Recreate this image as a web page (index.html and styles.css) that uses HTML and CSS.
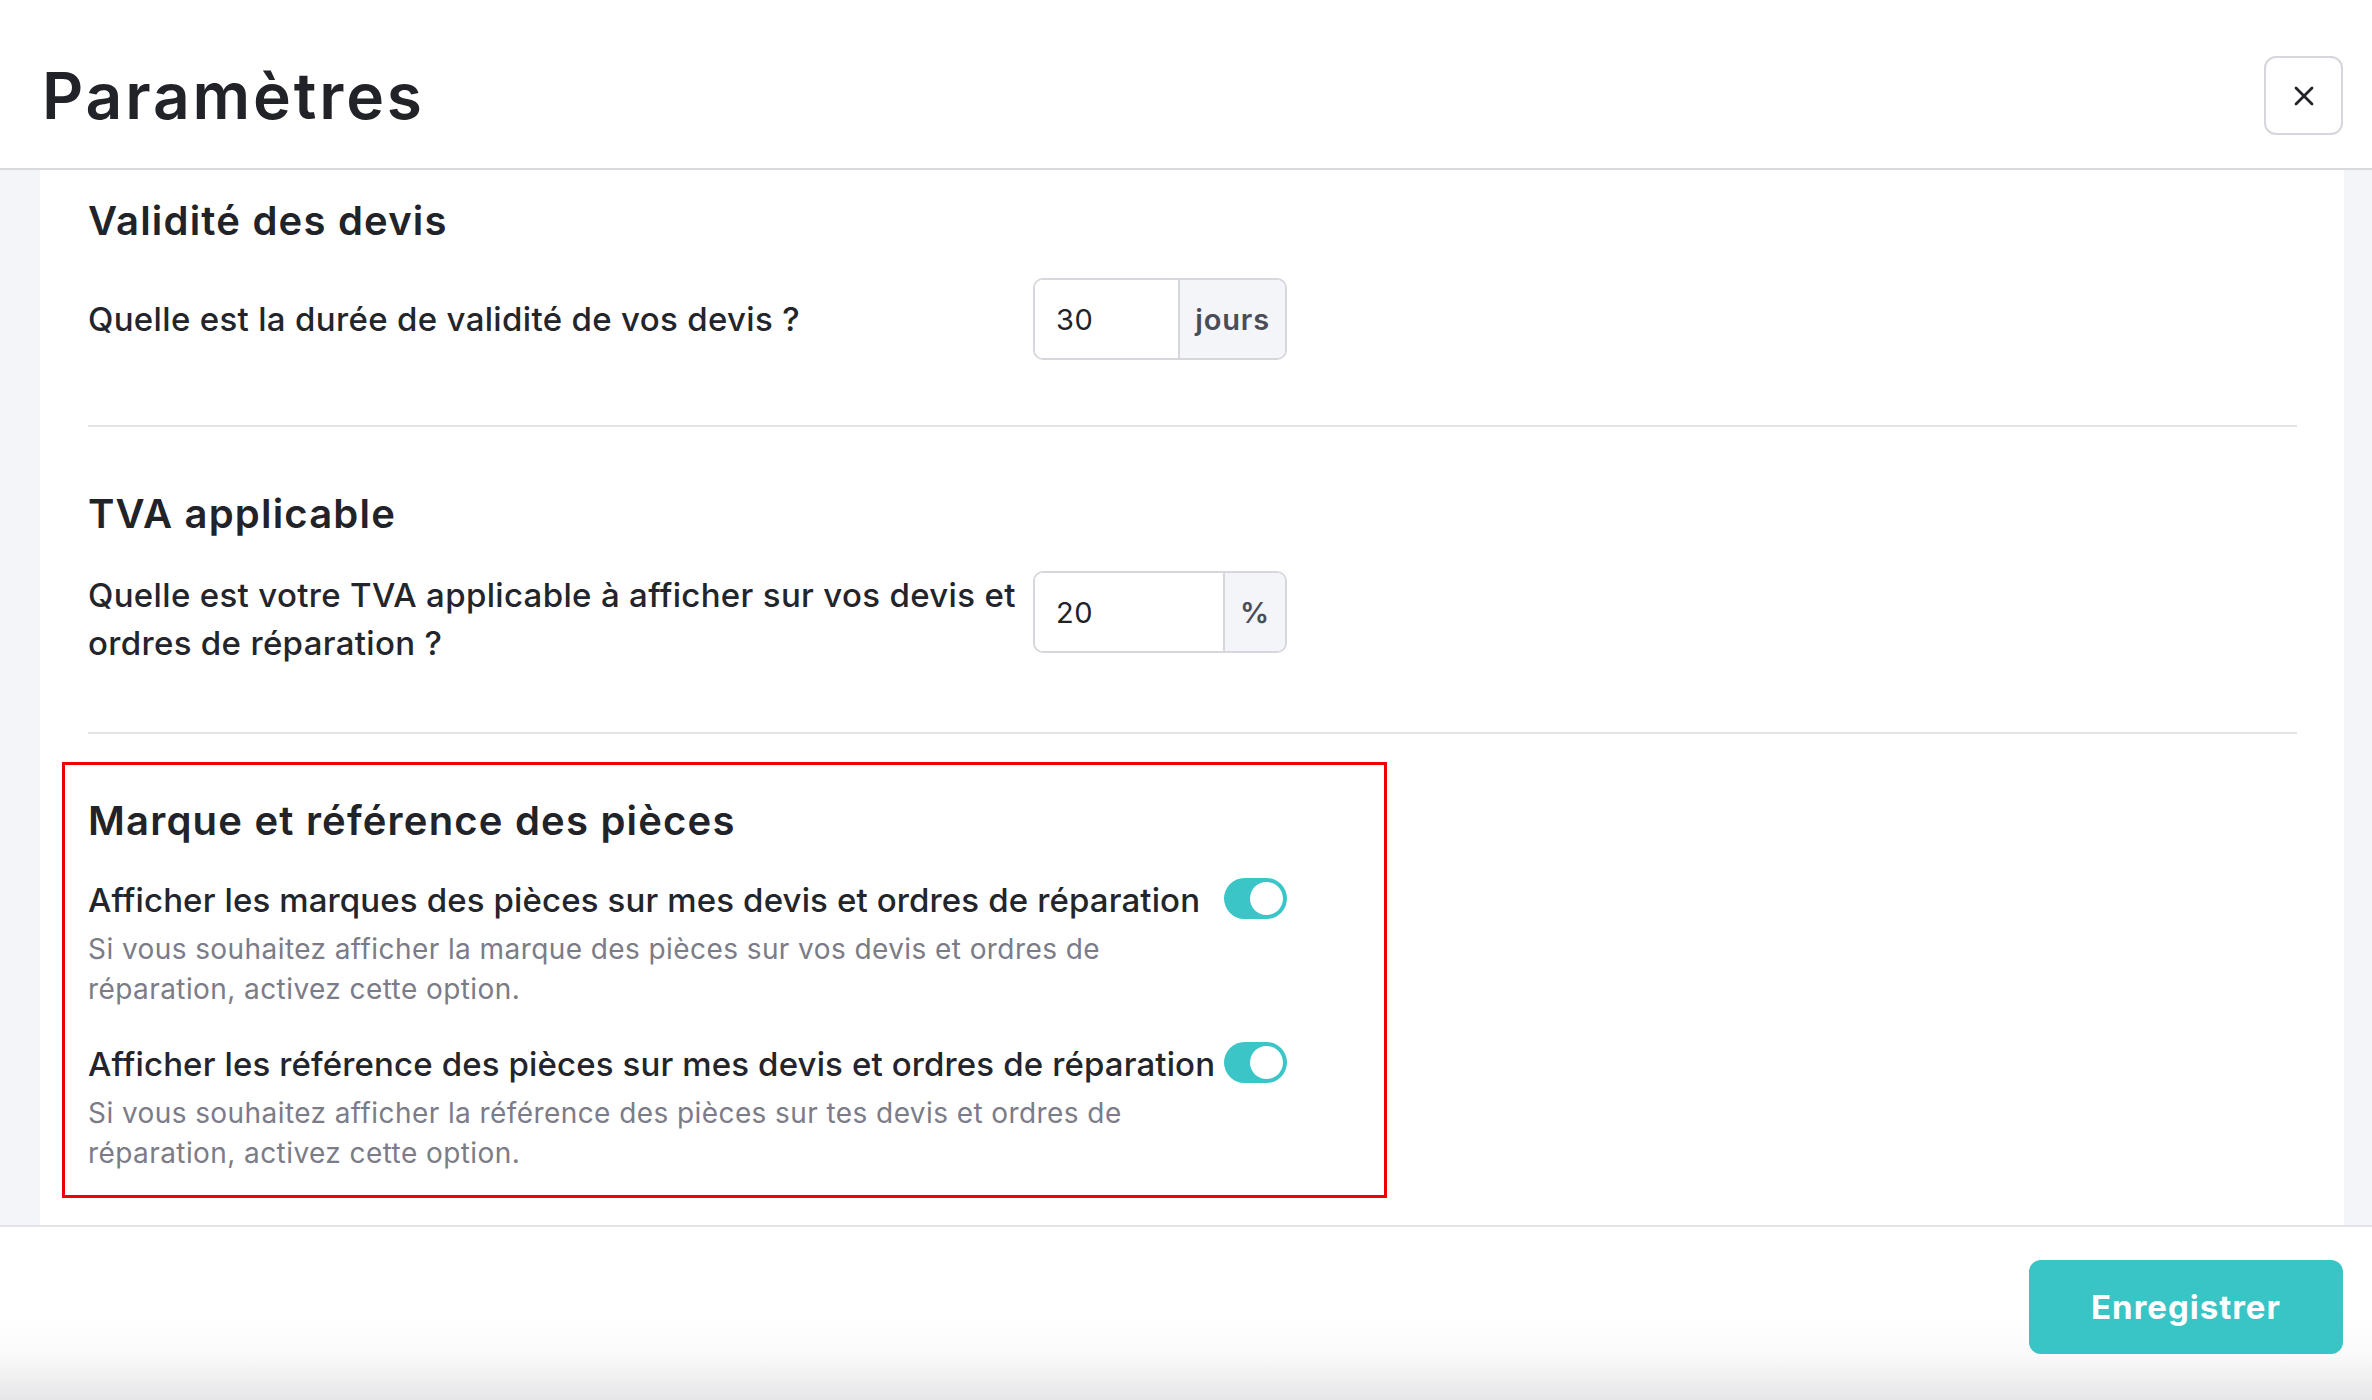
FILE: index.html
```html
<!DOCTYPE html>
<html lang="fr">
<head>
    <meta charset="UTF-8">
    <meta name="viewport" content="width=device-width, initial-scale=1.0">
    <title>Paramètres</title>
    <link rel="stylesheet" href="styles.css">
</head>
<body>
    <div class="modal">
        <div class="modal-header">
            <h1>Paramètres</h1>
            <button type="button" class="close-btn" aria-label="Fermer">
                <svg width="20" height="20" viewBox="0 0 20 20">
                    <path d="M2 2 L18 18 M18 2 L2 18" stroke="#222328" stroke-width="2.8" stroke-linecap="round" fill="none"/>
                </svg>
            </button>
        </div>

        <div class="modal-body">
            <div class="panel">
                <div class="section first">
                    <h2>Validité des devis</h2>
                    <div class="row">
                        <label for="validite">Quelle est la durée de validité de vos devis ?</label>
                        <div class="input-group">
                            <input type="text" id="validite" value="30">
                            <span class="addon">jours</span>
                        </div>
                    </div>
                </div>

                <div class="section">
                    <h2>TVA applicable</h2>
                    <div class="row">
                        <label for="tva">Quelle est votre TVA applicable à afficher sur vos devis et ordres de réparation ?</label>
                        <div class="input-group">
                            <input type="text" id="tva" value="20">
                            <span class="addon">%</span>
                        </div>
                    </div>
                </div>

                <div class="pieces">
                    <h2>Marque et référence des pièces</h2>

                    <div class="toggle-row">
                        <span class="toggle-label">Afficher les marques des pièces sur mes devis et ordres de réparation</span>
                        <span class="toggle on"><span class="knob"></span></span>
                    </div>
                    <p class="hint">Si vous souhaitez afficher la marque des pièces sur vos devis et ordres de réparation, activez cette option.</p>

                    <div class="toggle-row second">
                        <span class="toggle-label">Afficher les référence des pièces sur mes devis et ordres de réparation</span>
                        <span class="toggle on"><span class="knob"></span></span>
                    </div>
                    <p class="hint">Si vous souhaitez afficher la référence des pièces sur tes devis et ordres de réparation, activez cette option.</p>
                </div>
            </div>
        </div>

        <div class="modal-footer">
            <button type="button" class="save-btn">Enregistrer</button>
        </div>
    </div>
</body>
</html>
```

FILE: styles.css
```css
* {
    box-sizing: border-box;
}
body {
    margin: 0;
    font-family: "Inter", "Noto Sans", sans-serif;
    color: #24252b;
    background-color: #f4f5f9;
}
.modal {
    height: 100vh;
    display: flex;
    flex-direction: column;
}
.modal-header {
    height: 170px;
    padding: 56px 29px 0 42px;
    display: flex;
    justify-content: space-between;
    align-items: flex-start;
    background-color: #fff;
    border-bottom: 2px solid #d9d9de;
}
.modal-header h1 {
    margin: 0;
    height: 79px;
    display: flex;
    align-items: center;
    font-size: 64px;
    font-weight: 600;
    letter-spacing: 0.045em;
    color: #222328;
}
.close-btn {
    width: 79px;
    height: 79px;
    padding: 0;
    display: flex;
    align-items: center;
    justify-content: center;
    background: #fff;
    border: 2px solid #d6d6dc;
    border-radius: 12px;
    cursor: pointer;
}
.modal-body {
    flex: 1;
    padding: 0 28px 0 40px;
}
.panel {
    height: 100%;
    padding: 0 47px 0 48px;
    background-color: #fff;
}
h2 {
    margin: 0;
    font-size: 40px;
    line-height: 48px;
    font-weight: 600;
    letter-spacing: 0.03em;
    color: #222328;
}
.section {
    padding: 63px 0 65px;
    border-bottom: 2px solid #e4e4e8;
}
.section.first {
    padding-top: 27px;
}
.row {
    max-width: 1199px;
    margin-top: 33px;
    display: flex;
    align-items: flex-start;
    gap: 4px;
}
.row label {
    flex: 1;
    font-size: 33px;
    line-height: 48px;
    font-weight: 500;
    letter-spacing: 0.01em;
}
.section.first .row {
    align-items: center;
}
.input-group {
    width: 254px;
    height: 82px;
    flex-shrink: 0;
    display: flex;
    border: 2px solid #d6d6dc;
    border-radius: 10px;
    overflow: hidden;
}
.input-group input {
    flex: 1;
    min-width: 0;
    padding: 0 0 0 21px;
    border: none;
    outline: none;
    font-family: inherit;
    font-size: 29px;
    letter-spacing: 0.02em;
    color: #222328;
}
.addon {
    padding: 0 15px;
    display: flex;
    align-items: center;
    background-color: #f4f5f9;
    border-left: 2px solid #d6d6dc;
    font-size: 29px;
    font-weight: 600;
    letter-spacing: 0.03em;
    color: #4b4c57;
}
.pieces {
    width: 1325px;
    margin: 28px 0 0 -26px;
    padding: 32px 97px 22px 23px;
    border: 3px solid #f00000;
}
.toggle-row {
    margin-top: 31px;
    display: flex;
    justify-content: space-between;
    align-items: center;
    gap: 2px;
}
.toggle-label {
    white-space: nowrap;
    font-size: 33px;
    line-height: 48px;
    font-weight: 500;
    letter-spacing: 0.004em;
}
.toggle {
    width: 63px;
    height: 41px;
    margin-top: -3px;
    flex-shrink: 0;
    padding: 4px;
    display: flex;
    justify-content: flex-end;
    border-radius: 21px;
    background-color: #3bc5c7;
}
.knob {
    width: 33px;
    height: 33px;
    border-radius: 50%;
    background-color: #fff;
}
.hint {
    max-width: 1080px;
    margin: 5px 0 0;
    font-size: 28px;
    line-height: 40px;
    letter-spacing: 0.015em;
    color: #7b7c87;
}
.modal-footer {
    height: 175px;
    padding: 33px 29px 0 0;
    display: flex;
    justify-content: flex-end;
    align-items: flex-start;
    border-top: 2px solid #e4e4e8;
    background: linear-gradient(to bottom, #fff 50%, #fbfbfb 72%, #e6e6e8 100%);
}
.save-btn {
    width: 314px;
    height: 94px;
    border: none;
    border-radius: 12px;
    background-color: #39c4c6;
    color: #fff;
    font-family: inherit;
    font-size: 33px;
    font-weight: 700;
    letter-spacing: 0.03em;
    cursor: pointer;
}
```
